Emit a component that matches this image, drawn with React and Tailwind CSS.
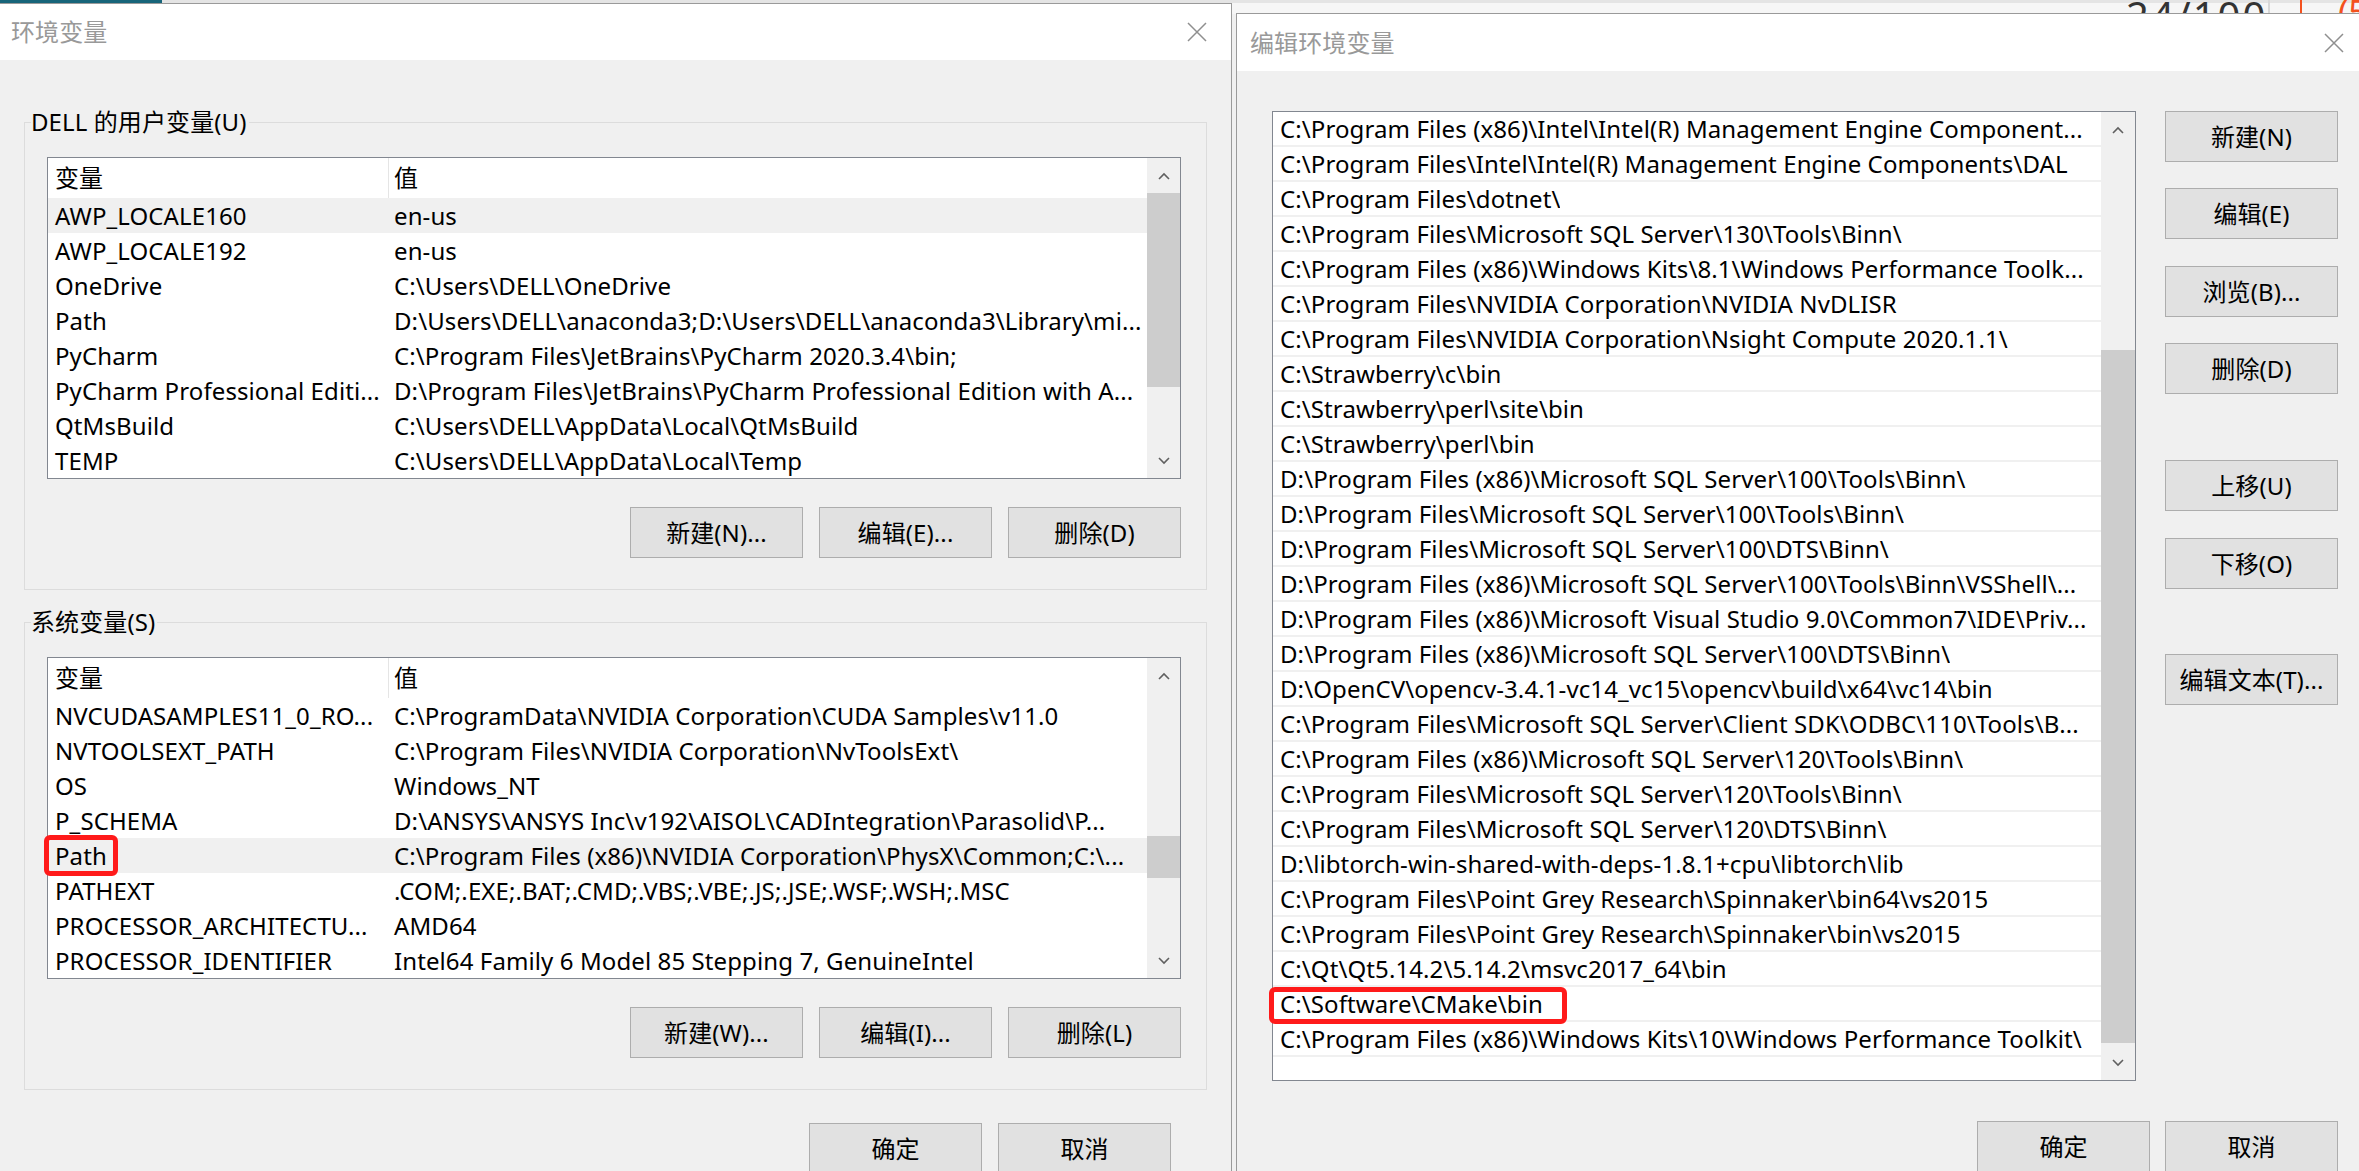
import React from 'react';

const userVars = [
  { name: 'AWP_LOCALE160', value: 'en-us', sel: true },
  { name: 'AWP_LOCALE192', value: 'en-us' },
  { name: 'OneDrive', value: 'C:\\Users\\DELL\\OneDrive' },
  { name: 'Path', value: 'D:\\Users\\DELL\\anaconda3;D:\\Users\\DELL\\anaconda3\\Library\\mi...' },
  { name: 'PyCharm', value: 'C:\\Program Files\\JetBrains\\PyCharm 2020.3.4\\bin;' },
  { name: 'PyCharm Professional Editi...', value: 'D:\\Program Files\\JetBrains\\PyCharm Professional Edition with A...' },
  { name: 'QtMsBuild', value: 'C:\\Users\\DELL\\AppData\\Local\\QtMsBuild' },
  { name: 'TEMP', value: 'C:\\Users\\DELL\\AppData\\Local\\Temp' },
];

const sysVars = [
  { name: 'NVCUDASAMPLES11_0_RO...', value: 'C:\\ProgramData\\NVIDIA Corporation\\CUDA Samples\\v11.0' },
  { name: 'NVTOOLSEXT_PATH', value: 'C:\\Program Files\\NVIDIA Corporation\\NvToolsExt\\' },
  { name: 'OS', value: 'Windows_NT' },
  { name: 'P_SCHEMA', value: 'D:\\ANSYS\\ANSYS Inc\\v192\\AISOL\\CADIntegration\\Parasolid\\P...' },
  { name: 'Path', value: 'C:\\Program Files (x86)\\NVIDIA Corporation\\PhysX\\Common;C:\\...', sel: true },
  { name: 'PATHEXT', value: '.COM;.EXE;.BAT;.CMD;.VBS;.VBE;.JS;.JSE;.WSF;.WSH;.MSC' },
  { name: 'PROCESSOR_ARCHITECTU...', value: 'AMD64' },
  { name: 'PROCESSOR_IDENTIFIER', value: 'Intel64 Family 6 Model 85 Stepping 7, GenuineIntel' },
];

const paths = [
  'C:\\Program Files (x86)\\Intel\\Intel(R) Management Engine Component...',
  'C:\\Program Files\\Intel\\Intel(R) Management Engine Components\\DAL',
  'C:\\Program Files\\dotnet\\',
  'C:\\Program Files\\Microsoft SQL Server\\130\\Tools\\Binn\\',
  'C:\\Program Files (x86)\\Windows Kits\\8.1\\Windows Performance Toolk...',
  'C:\\Program Files\\NVIDIA Corporation\\NVIDIA NvDLISR',
  'C:\\Program Files\\NVIDIA Corporation\\Nsight Compute 2020.1.1\\',
  'C:\\Strawberry\\c\\bin',
  'C:\\Strawberry\\perl\\site\\bin',
  'C:\\Strawberry\\perl\\bin',
  'D:\\Program Files (x86)\\Microsoft SQL Server\\100\\Tools\\Binn\\',
  'D:\\Program Files\\Microsoft SQL Server\\100\\Tools\\Binn\\',
  'D:\\Program Files\\Microsoft SQL Server\\100\\DTS\\Binn\\',
  'D:\\Program Files (x86)\\Microsoft SQL Server\\100\\Tools\\Binn\\VSShell\\...',
  'D:\\Program Files (x86)\\Microsoft Visual Studio 9.0\\Common7\\IDE\\Priv...',
  'D:\\Program Files (x86)\\Microsoft SQL Server\\100\\DTS\\Binn\\',
  'D:\\OpenCV\\opencv-3.4.1-vc14_vc15\\opencv\\build\\x64\\vc14\\bin',
  'C:\\Program Files\\Microsoft SQL Server\\Client SDK\\ODBC\\110\\Tools\\B...',
  'C:\\Program Files (x86)\\Microsoft SQL Server\\120\\Tools\\Binn\\',
  'C:\\Program Files\\Microsoft SQL Server\\120\\Tools\\Binn\\',
  'C:\\Program Files\\Microsoft SQL Server\\120\\DTS\\Binn\\',
  'D:\\libtorch-win-shared-with-deps-1.8.1+cpu\\libtorch\\lib',
  'C:\\Program Files\\Point Grey Research\\Spinnaker\\bin64\\vs2015',
  'C:\\Program Files\\Point Grey Research\\Spinnaker\\bin\\vs2015',
  'C:\\Qt\\Qt5.14.2\\5.14.2\\msvc2017_64\\bin',
  'C:\\Software\\CMake\\bin',
  'C:\\Program Files (x86)\\Windows Kits\\10\\Windows Performance Toolkit\\',
];

const Chevron = ({ up }) => (
  <svg width="12" height="8" viewBox="0 0 12 8">
    <polyline
      points={up ? '1,7 6,2 11,7' : '1,1 6,6 11,1'}
      fill="none"
      stroke="#606060"
      strokeWidth="1.6"
    />
  </svg>
);

const CloseIcon = () => (
  <svg width="20" height="20" viewBox="0 0 20 20">
    <path d="M1 1L19 19M19 1L1 19" stroke="#8f8f8f" strokeWidth="1.5" />
  </svg>
);

// scrollbar: arrow zone, gap before thumb, thumb, rest, arrow zone
const ScrollBar = ({ gap, thumb, width = 'w-[33px]' }) => (
  <div className={`flex ${width} shrink-0 flex-col bg-[#f0f0f0]`}>
    <div className="flex h-[35px] shrink-0 items-center justify-center">
      <Chevron up />
    </div>
    <div className={`${gap} shrink-0`} />
    <div className={`${thumb} shrink-0 bg-[#cdcdcd]`} />
    <div className="flex-1" />
    <div className="flex h-[35px] shrink-0 items-center justify-center">
      <Chevron />
    </div>
  </div>
);

const Button = ({ children }) => (
  <div className="flex h-[51px] w-[173px] shrink-0 items-center justify-center border border-[#adadad] bg-[#e1e1e1] text-black">
    {children}
  </div>
);

const VarTable = ({ rows, gap, thumb, mark }) => (
  <div className="relative flex h-[322px] border border-[#828790] bg-white">
    <div className="flex min-w-0 flex-1 flex-col overflow-hidden">
      <div className="flex h-[40px] shrink-0 items-center">
        <div className="w-[340px] shrink-0 pl-[7px]">变量</div>
        <div className="h-full w-px bg-[#e5e5e5]" />
        <div className="pl-[5px]">值</div>
      </div>
      {rows.map((r, i) => (
        <div
          key={i}
          className={`flex h-[35px] shrink-0 items-center ${r.sel ? 'bg-[#f0f0f0]' : ''}`}
        >
          <div className="w-[341px] shrink-0 truncate pl-[7px]">{r.name}</div>
          <div className="min-w-0 flex-1 truncate pl-[5px]">{r.value}</div>
        </div>
      ))}
    </div>
    <ScrollBar gap={gap} thumb={thumb} />
    {mark}
  </div>
);

const GroupBox = ({ label, children, className = '' }) => (
  <div className={className}>
    <div className="relative z-10 ml-[7px] w-fit bg-[#f0f0f0] pr-[2px] leading-[28px]">
      {label}
    </div>
    <div className="-mt-[14px] border border-[#dcdcdc] pt-[34px] pb-[31px] pl-[22px] pr-[25px]">
      {children}
    </div>
  </div>
);

export default function App() {
  return (
    <div className="relative h-[1171px] w-[2359px] overflow-hidden bg-[#f0f0f0] font-['Noto_Sans','Noto_Sans_CJK_SC',sans-serif] text-[24px] leading-[32px] tracking-[0.1px] text-black">
      {/* desktop behind the dialogs */}
      <div className="absolute inset-x-0 top-0 flex h-[14px] bg-[#f6f6f6]">
        <div className="h-[3px] w-[162px] bg-[#17657a]" />
        <div className="h-[3px] flex-1 bg-[#e4e4e4]" />
        <div className="absolute left-[2126px] top-[-4px] text-[40px] leading-[40px] tracking-[2px] text-[#333]">
          24/100
        </div>
        <div className="absolute left-[2258px] top-[-6px] h-[30px] w-[12px] rounded-full border-r-2 border-[#d8d8d8]" />
        <div className="absolute left-[2300px] top-[-6px] h-[30px] w-[12px] rounded-full border-l-2 border-[#f4511e]" />
        <div className="absolute left-[2338px] top-[-8px] text-[34px] leading-[40px] text-[#f4511e]">(5</div>
      </div>

      <div className="relative flex items-start">
        {/* 环境变量 */}
        <div className="mt-[3px] w-[1232px] shrink-0 border-t border-r border-[#9a9a9a] bg-[#f0f0f0] pb-[20px]">
          <div className="flex h-[56px] items-center justify-between bg-white pl-[11px] pr-[24px] text-[#999]">
            <span>环境变量</span>
            <CloseIcon />
          </div>
          <div className="px-[24px] pt-[48px]">
            <GroupBox label="DELL 的用户变量(U)">
              <VarTable rows={userVars} gap="h-0" thumb="h-[194px]" />
              <div className="mt-[28px] flex justify-end gap-[16px]">
                <Button>新建(N)...</Button>
                <Button>编辑(E)...</Button>
                <Button>删除(D)</Button>
              </div>
            </GroupBox>
            <GroupBox label="系统变量(S)" className="mt-[18px]">
              <VarTable
                rows={sysVars}
                gap="h-[143px]"
                thumb="h-[42px]"
                mark={
                  <div className="absolute left-[-4px] top-[177px] h-[41px] w-[74px] rounded-[6px] border-[5px] border-[#ff1a1a]" />
                }
              />
              <div className="mt-[28px] flex justify-end gap-[16px]">
                <Button>新建(W)...</Button>
                <Button>编辑(I)...</Button>
                <Button>删除(L)</Button>
              </div>
            </GroupBox>
            <div className="mt-[33px] flex justify-end gap-[16px] pr-[36px]">
              <Button>确定</Button>
              <Button>取消</Button>
            </div>
          </div>
        </div>

        {/* 编辑环境变量 */}
        <div className="mt-[13px] ml-[4px] min-w-0 flex-1 border-t border-l border-[#9a9a9a] bg-[#f0f0f0] pb-[20px]">
          <div className="flex h-[57px] items-center justify-between bg-white pl-[13px] pr-[15px] text-[#999]">
            <span>编辑环境变量</span>
            <CloseIcon />
          </div>
          <div className="w-[1101px] pl-[35px] pt-[40px]">
            <div className="flex gap-[29px]">
              <div className="relative flex h-[970px] w-[864px] shrink-0 border border-[#828790] bg-white">
                <div className="flex min-w-0 flex-1 flex-col overflow-hidden">
                  {paths.map((p, i) => (
                    <div
                      key={i}
                      className="flex h-[35px] shrink-0 items-center border-b-2 border-[#f0f0f0] pl-[7px]"
                    >
                      <span className="truncate">{p}</span>
                    </div>
                  ))}
                </div>
                <ScrollBar gap="h-[203px]" thumb="h-[693px]" width="w-[34px]" />
                <div className="absolute left-[-4px] top-[875px] h-[37px] w-[298px] rounded-[6px] border-[5px] border-[#ff1a1a]" />
              </div>
              <div className="flex flex-col">
                <Button>新建(N)</Button>
                <div className="mt-[26px]"><Button>编辑(E)</Button></div>
                <div className="mt-[27px]"><Button>浏览(B)...</Button></div>
                <div className="mt-[26px]"><Button>删除(D)</Button></div>
                <div className="mt-[66px]"><Button>上移(U)</Button></div>
                <div className="mt-[27px]"><Button>下移(O)</Button></div>
                <div className="mt-[65px]"><Button>编辑文本(T)...</Button></div>
              </div>
            </div>
            <div className="mt-[40px] flex justify-end gap-[15px]">
              <Button>确定</Button>
              <Button>取消</Button>
            </div>
          </div>
        </div>
      </div>
    </div>
  );
}
